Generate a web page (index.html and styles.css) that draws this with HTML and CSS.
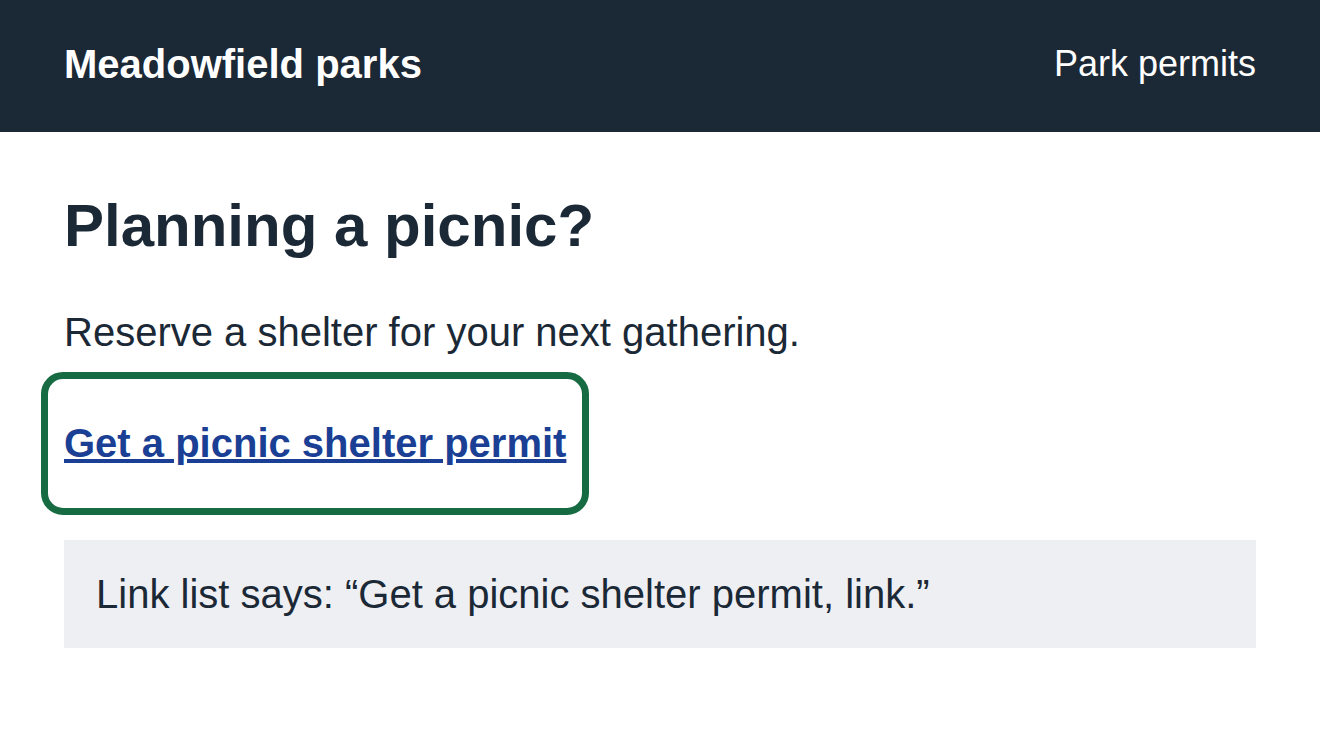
FILE: index.html
```html
<!DOCTYPE html>
<html lang="en">
<head>
	<meta charset="utf-8" />
	<title>Meadowfield parks</title>
	<link rel="stylesheet" href="styles.css">
</head>
<body>
	<header class="site-header">
		<a class="brand" href="#">Meadowfield parks</a>
		<a class="nav-link" href="#">Park permits</a>
	</header>
	<main class="page">
		<h1 class="title">Planning a picnic?</h1>
		<p class="lead">Reserve a shelter for your next gathering.</p>
		<div class="focus-ring">
			<a class="permit-link" href="#">Get a picnic shelter permit</a>
		</div>
		<div class="announce">Link list says: “Get a picnic shelter permit, link.”</div>
	</main>
</body>
</html>
```

FILE: styles.css
```css
body{
	margin: 0;
	background: #ffffff;
	color: #1b2836;
	font-family: "Liberation Sans", Arial, sans-serif;
}

.site-header{
	background: #1b2836;
	display: flex;
	justify-content: space-between;
	align-items: center;
	height: 128px;
	padding: 0 64px 4px 64px;
}

.brand{
	color: #ffffff;
	text-decoration: none;
	font-weight: bold;
	font-size: 40px;
}

.nav-link{
	color: #ffffff;
	text-decoration: none;
	font-size: 36px;
}

.page{
	padding: 58px 64px;
}

.title{
	margin: 0 0 40px 0;
	font-size: 60px;
	line-height: 72px;
	font-weight: bold;
}

.lead{
	margin: 0 0 10px 0;
	font-size: 40px;
	line-height: 60px;
}

/* focus ring drawn around the link */
.focus-ring{
	width: fit-content;
	margin-left: -23px;
	padding: 34px 16px 35px 16px;
	border: 7px solid #176b43;
	border-radius: 22px;
}

.permit-link{
	display: block;
	color: #1a3f94;
	font-size: 40px;
	line-height: 60px;
	font-weight: bold;
}

.announce{
	margin-top: 25px;
	background: #eeeff3;
	padding: 24px 32px;
	font-size: 40px;
	line-height: 60px;
}
```
